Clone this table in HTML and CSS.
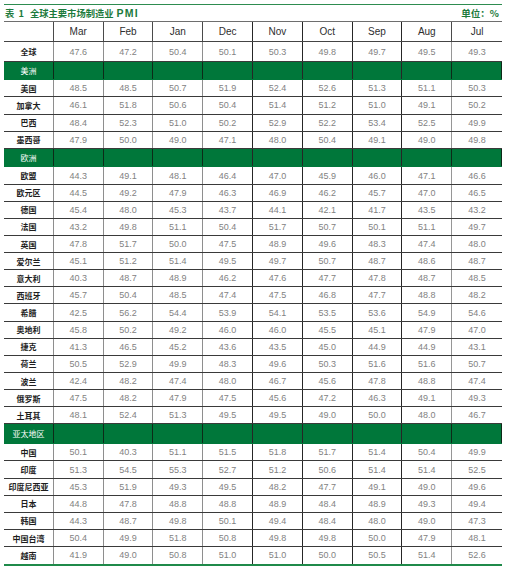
FILE: index.html
```html
<!DOCTYPE html>
<html lang="zh">
<head>
<meta charset="utf-8">
<title>表1 全球主要市场制造业 PMI</title>
<link rel="stylesheet" href="styles.css">
</head>
<body>
<div class="sheet">
  <div class="titlebar">
    <div class="title"><span class="t-no">表 1</span><span class="t-main">全球主要市场制造业</span><span class="t-pmi">PMI</span></div>
    <div class="unit">单位：%</div>
  </div>
  <div class="table">
    <div class="row head"><div class="c"></div><div class="c">Mar</div><div class="c">Feb</div><div class="c">Jan</div><div class="c">Dec</div><div class="c">Nov</div><div class="c">Oct</div><div class="c">Sep</div><div class="c">Aug</div><div class="c">Jul</div></div>
    <div class="row global"><div class="c lab">全球</div><div class="c">47.6</div><div class="c">47.2</div><div class="c">50.4</div><div class="c">50.1</div><div class="c">50.3</div><div class="c">49.8</div><div class="c">49.7</div><div class="c">49.5</div><div class="c">49.3</div></div>
    <div class="row grp g1"><div class="c lab">美洲</div><div class="c"></div><div class="c"></div><div class="c"></div><div class="c"></div><div class="c"></div><div class="c"></div><div class="c"></div><div class="c"></div><div class="c"></div></div>
    <div class="row"><div class="c lab">美国</div><div class="c">48.5</div><div class="c">48.5</div><div class="c">50.7</div><div class="c">51.9</div><div class="c">52.4</div><div class="c">52.6</div><div class="c">51.3</div><div class="c">51.1</div><div class="c">50.3</div></div>
    <div class="row"><div class="c lab">加拿大</div><div class="c">46.1</div><div class="c">51.8</div><div class="c">50.6</div><div class="c">50.4</div><div class="c">51.4</div><div class="c">51.2</div><div class="c">51.0</div><div class="c">49.1</div><div class="c">50.2</div></div>
    <div class="row"><div class="c lab">巴西</div><div class="c">48.4</div><div class="c">52.3</div><div class="c">51.0</div><div class="c">50.2</div><div class="c">52.9</div><div class="c">52.2</div><div class="c">53.4</div><div class="c">52.5</div><div class="c">49.9</div></div>
    <div class="row"><div class="c lab">墨西哥</div><div class="c">47.9</div><div class="c">50.0</div><div class="c">49.0</div><div class="c">47.1</div><div class="c">48.0</div><div class="c">50.4</div><div class="c">49.1</div><div class="c">49.0</div><div class="c">49.8</div></div>
    <div class="row grp g2"><div class="c lab">欧洲</div><div class="c"></div><div class="c"></div><div class="c"></div><div class="c"></div><div class="c"></div><div class="c"></div><div class="c"></div><div class="c"></div><div class="c"></div></div>
    <div class="row"><div class="c lab">欧盟</div><div class="c">44.3</div><div class="c">49.1</div><div class="c">48.1</div><div class="c">46.4</div><div class="c">47.0</div><div class="c">45.9</div><div class="c">46.0</div><div class="c">47.1</div><div class="c">46.6</div></div>
    <div class="row"><div class="c lab">欧元区</div><div class="c">44.5</div><div class="c">49.2</div><div class="c">47.9</div><div class="c">46.3</div><div class="c">46.9</div><div class="c">46.2</div><div class="c">45.7</div><div class="c">47.0</div><div class="c">46.5</div></div>
    <div class="row"><div class="c lab">德国</div><div class="c">45.4</div><div class="c">48.0</div><div class="c">45.3</div><div class="c">43.7</div><div class="c">44.1</div><div class="c">42.1</div><div class="c">41.7</div><div class="c">43.5</div><div class="c">43.2</div></div>
    <div class="row"><div class="c lab">法国</div><div class="c">43.2</div><div class="c">49.8</div><div class="c">51.1</div><div class="c">50.4</div><div class="c">51.7</div><div class="c">50.7</div><div class="c">50.1</div><div class="c">51.1</div><div class="c">49.7</div></div>
    <div class="row"><div class="c lab">英国</div><div class="c">47.8</div><div class="c">51.7</div><div class="c">50.0</div><div class="c">47.5</div><div class="c">48.9</div><div class="c">49.6</div><div class="c">48.3</div><div class="c">47.4</div><div class="c">48.0</div></div>
    <div class="row"><div class="c lab">爱尔兰</div><div class="c">45.1</div><div class="c">51.2</div><div class="c">51.4</div><div class="c">49.5</div><div class="c">49.7</div><div class="c">50.7</div><div class="c">48.7</div><div class="c">48.6</div><div class="c">48.7</div></div>
    <div class="row"><div class="c lab">意大利</div><div class="c">40.3</div><div class="c">48.7</div><div class="c">48.9</div><div class="c">46.2</div><div class="c">47.6</div><div class="c">47.7</div><div class="c">47.8</div><div class="c">48.7</div><div class="c">48.5</div></div>
    <div class="row"><div class="c lab">西班牙</div><div class="c">45.7</div><div class="c">50.4</div><div class="c">48.5</div><div class="c">47.4</div><div class="c">47.5</div><div class="c">46.8</div><div class="c">47.7</div><div class="c">48.8</div><div class="c">48.2</div></div>
    <div class="row"><div class="c lab">希腊</div><div class="c">42.5</div><div class="c">56.2</div><div class="c">54.4</div><div class="c">53.9</div><div class="c">54.1</div><div class="c">53.5</div><div class="c">53.6</div><div class="c">54.9</div><div class="c">54.6</div></div>
    <div class="row"><div class="c lab">奥地利</div><div class="c">45.8</div><div class="c">50.2</div><div class="c">49.2</div><div class="c">46.0</div><div class="c">46.0</div><div class="c">45.5</div><div class="c">45.1</div><div class="c">47.9</div><div class="c">47.0</div></div>
    <div class="row"><div class="c lab">捷克</div><div class="c">41.3</div><div class="c">46.5</div><div class="c">45.2</div><div class="c">43.6</div><div class="c">43.5</div><div class="c">45.0</div><div class="c">44.9</div><div class="c">44.9</div><div class="c">43.1</div></div>
    <div class="row"><div class="c lab">荷兰</div><div class="c">50.5</div><div class="c">52.9</div><div class="c">49.9</div><div class="c">48.3</div><div class="c">49.6</div><div class="c">50.3</div><div class="c">51.6</div><div class="c">51.6</div><div class="c">50.7</div></div>
    <div class="row"><div class="c lab">波兰</div><div class="c">42.4</div><div class="c">48.2</div><div class="c">47.4</div><div class="c">48.0</div><div class="c">46.7</div><div class="c">45.6</div><div class="c">47.8</div><div class="c">48.8</div><div class="c">47.4</div></div>
    <div class="row"><div class="c lab">俄罗斯</div><div class="c">47.5</div><div class="c">48.2</div><div class="c">47.9</div><div class="c">47.5</div><div class="c">45.6</div><div class="c">47.2</div><div class="c">46.3</div><div class="c">49.1</div><div class="c">49.3</div></div>
    <div class="row"><div class="c lab">土耳其</div><div class="c">48.1</div><div class="c">52.4</div><div class="c">51.3</div><div class="c">49.5</div><div class="c">49.5</div><div class="c">49.0</div><div class="c">50.0</div><div class="c">48.0</div><div class="c">46.7</div></div>
    <div class="row grp g3"><div class="c lab">亚太地区</div><div class="c"></div><div class="c"></div><div class="c"></div><div class="c"></div><div class="c"></div><div class="c"></div><div class="c"></div><div class="c"></div><div class="c"></div></div>
    <div class="row"><div class="c lab">中国</div><div class="c">50.1</div><div class="c">40.3</div><div class="c">51.1</div><div class="c">51.5</div><div class="c">51.8</div><div class="c">51.7</div><div class="c">51.4</div><div class="c">50.4</div><div class="c">49.9</div></div>
    <div class="row"><div class="c lab">印度</div><div class="c">51.3</div><div class="c">54.5</div><div class="c">55.3</div><div class="c">52.7</div><div class="c">51.2</div><div class="c">50.6</div><div class="c">51.4</div><div class="c">51.4</div><div class="c">52.5</div></div>
    <div class="row"><div class="c lab">印度尼西亚</div><div class="c">45.3</div><div class="c">51.9</div><div class="c">49.3</div><div class="c">49.5</div><div class="c">48.2</div><div class="c">47.7</div><div class="c">49.1</div><div class="c">49.0</div><div class="c">49.6</div></div>
    <div class="row"><div class="c lab">日本</div><div class="c">44.8</div><div class="c">47.8</div><div class="c">48.8</div><div class="c">48.8</div><div class="c">48.9</div><div class="c">48.4</div><div class="c">48.9</div><div class="c">49.3</div><div class="c">49.4</div></div>
    <div class="row"><div class="c lab">韩国</div><div class="c">44.3</div><div class="c">48.7</div><div class="c">49.8</div><div class="c">50.1</div><div class="c">49.4</div><div class="c">48.4</div><div class="c">48.0</div><div class="c">49.0</div><div class="c">47.3</div></div>
    <div class="row"><div class="c lab">中国台湾</div><div class="c">50.4</div><div class="c">49.9</div><div class="c">51.8</div><div class="c">50.8</div><div class="c">49.8</div><div class="c">49.8</div><div class="c">50.0</div><div class="c">47.9</div><div class="c">48.1</div></div>
    <div class="row last"><div class="c lab">越南</div><div class="c">41.9</div><div class="c">49.0</div><div class="c">50.8</div><div class="c">51.0</div><div class="c">51.0</div><div class="c">50.0</div><div class="c">50.5</div><div class="c">51.4</div><div class="c">52.6</div></div>
  </div>
</div>
</body>
</html>
```
FILE: styles.css
```css
html, body {
  margin: 0;
  padding: 0;
  background: #ffffff;
}

.sheet {
  width: 498px;
  margin-left: 4px;
  padding-top: 4px;
  font-family: "Liberation Sans", "Noto Sans CJK SC", sans-serif;
}

.titlebar {
  box-sizing: border-box;
  height: 16.5px;
  border-top: 1.5px solid #2e8c50;
  display: flex;
  justify-content: space-between;
  align-items: center;
  color: #1c7a3c;
  font-weight: bold;
  font-family: "Noto Sans CJK SC", "Liberation Sans", sans-serif;
  font-size: 9.3px;
  padding: 1px 3px 0 1px;
}

.t-no {
  word-spacing: 2px;
}

.t-main {
  margin-left: 6px;
}

.t-pmi {
  margin-left: 3px;
  font-family: "Liberation Sans", sans-serif;
  font-size: 10.5px;
  letter-spacing: 1.2px;
}

.unit {
  font-size: 9.5px;
}

.table {
  border-top: 1px solid #6e6e6e;
}

.row {
  box-sizing: border-box;
  display: grid;
  grid-template-columns: repeat(10, 1fr);
  height: 17.13px;
  border-bottom: 1px solid #3a3a3a;
}

.c {
  display: flex;
  align-items: center;
  justify-content: center;
  font-size: 9px;
  color: #828282;
  white-space: nowrap;
}

.c:nth-child(-n+4) {
  border-right: 1.5px solid #8e8e8e;
}

.c:nth-child(n+5):nth-child(-n+8) {
  border-right: 1px solid #262626;
}

.c:nth-child(9) {
  border-right: 1.5px solid #969696;
}

.lab {
  font-family: "Noto Sans CJK SC", sans-serif;
  font-weight: bold;
  font-size: 8px;
  color: #1e1e1e;
}

.head {
  height: 20.5px;
  border-bottom-color: #444444;
}

.head .c {
  font-size: 10px;
  color: #2e2e2e;
  border-right-color: #4a4a4a;
}

.global {
  height: 20px;
}

.grp {
  background: #00773a;
  border-bottom-color: #00773a;
}

.grp .c {
  border-right: 1px solid #0d2a18;
}

.grp .lab {
  color: #ffffff;
  font-weight: normal;
}

.g1 {
  height: 18.3px;
}

.g2 {
  height: 18.7px;
}

.g3 {
  height: 20px;
}

.last {
  height: 18.6px;
  border-bottom: 2px solid #1f8a4a;
}
```
